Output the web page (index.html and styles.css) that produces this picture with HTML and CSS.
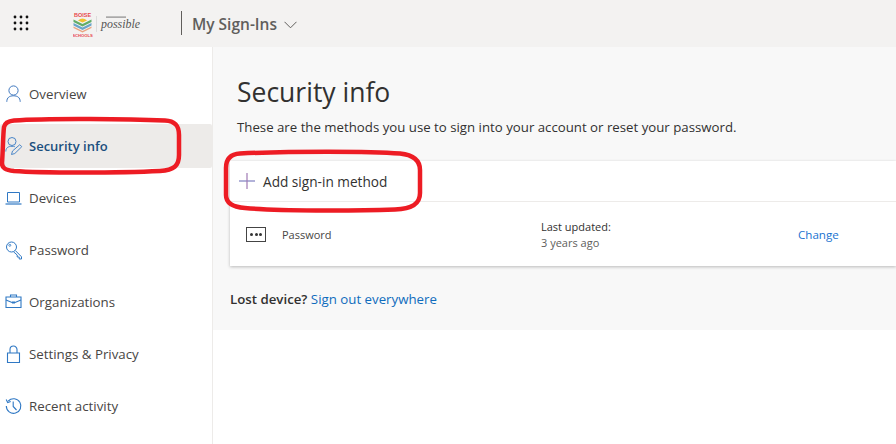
FILE: index.html
```html
<!DOCTYPE html>
<html lang="en">
<head>
<meta charset="utf-8">
<title>My Sign-Ins</title>
<link rel="stylesheet" href="styles.css">
</head>
<body>
<header class="topbar">
  <svg class="waffle" width="16" height="16" viewBox="0 0 16 16"><g fill="#111"><circle cx="2" cy="2" r="1.400"/><circle cx="8" cy="2" r="1.400"/><circle cx="14" cy="2" r="1.400"/><circle cx="2" cy="8" r="1.400"/><circle cx="8" cy="8" r="1.400"/><circle cx="14" cy="8" r="1.400"/><circle cx="2" cy="14" r="1.400"/><circle cx="8" cy="14" r="1.400"/><circle cx="14" cy="14" r="1.400"/></g></svg>
  <svg class="logo" width="70" height="26" viewBox="0 0 70 26">
    <text class="logo-boise" x="9.500" y="5.500" text-anchor="middle">BOISE</text>
    <path d="M5 9.500 Q9.500 5.500 14 9.500 L9.500 11.500Z" fill="#f2c230"/>
    <path d="M0.500 8.500 L9.500 13 L18.500 8.500 V11 L9.500 15.500 L0.500 11Z" fill="#62ad68"/>
    <path d="M0.500 12 L9.500 16.500 L18.500 12 V14.500 L9.500 19 L0.500 14.500Z" fill="#6aa5c9"/>
    <path d="M0.500 15.500 L9.500 20 L18.500 15.500 V17 L9.500 21.500 L0.500 17Z" fill="#e9a37f"/>
    <text class="logo-schools" x="9.500" y="25.500" text-anchor="middle">SCHOOLS</text>
    <rect x="23" y="5" width="1" height="16" fill="#dcdcdc"/>
    <rect x="33" y="5.500" width="20" height="1.200" fill="#8a8a8a"/>
    <text class="logo-script" x="28" y="17" textLength="39" lengthAdjust="spacingAndGlyphs">possible</text>
  </svg>
  <span class="divider"></span>
  <span class="app-title">My Sign-Ins</span>
  <svg class="chevron" width="13" height="8" viewBox="0 0 13 8"><path d="M.5.800 6.500 6.800 12.500.800" fill="none" stroke="#605e5c" stroke-width="1"/></svg>
</header>

<div class="layout">
  <nav class="sidebar">
    <a class="nav-item">
      <svg class="nav-icon" width="18" height="20" viewBox="0 0 18 20"><circle cx="8.500" cy="6.500" r="4.600" fill="none" stroke="#3f78bf" stroke-width="1"/><path d="M1.800 17.800C1.800 13.500 4.500 11.800 8.500 11.800s6.700 1.700 6.700 6" fill="none" stroke="#3f78bf" stroke-width="1"/></svg>
      <span>Overview</span>
    </a>
    <a class="nav-item active">
      <svg class="nav-icon" width="18" height="20" viewBox="0 0 18 20"><circle cx="7" cy="5.500" r="4" fill="none" stroke="#4a86c8" stroke-width="1"/><path d="M.8 15.500C.8 12 3 10.300 7 10.300c1 0 2 .1 2.800.4" fill="none" stroke="#4a86c8" stroke-width="1"/><path d="M6.500 18.500 7.500 15 14.800 8.700 16.800 10.700 9.800 17.500Z" fill="none" stroke="#4a86c8" stroke-width="1"/></svg>
      <span>Security info</span>
    </a>
    <a class="nav-item">
      <svg class="nav-icon" width="18" height="20" viewBox="0 0 18 20"><path d="M2.500 4.500h12v9.500h-12z" fill="none" stroke="#2f78c4" stroke-width="1"/><path d="M.5 16h16" fill="none" stroke="#2f78c4" stroke-width="1.200"/></svg>
      <span>Devices</span>
    </a>
    <a class="nav-item">
      <svg class="nav-icon" width="18" height="20" viewBox="0 0 18 20"><circle cx="6.500" cy="7" r="5" fill="none" stroke="#2f78c4" stroke-width="1"/><circle cx="4.800" cy="5.300" r="1" fill="none" stroke="#2f78c4" stroke-width=".8"/><path d="M10.300 10.500 16.500 16.800V19H14.200V17H12.200V15L8.500 11.800" fill="none" stroke="#2f78c4" stroke-width="1"/></svg>
      <span>Password</span>
    </a>
    <a class="nav-item">
      <svg class="nav-icon" width="18" height="20" viewBox="0 0 18 20"><path d="M1 5h15v10.500H1z" fill="none" stroke="#2f78c4" stroke-width="1.100"/><path d="M5.500 5V3h6v2" fill="none" stroke="#2f78c4" stroke-width="1.100"/><path d="M1 8l6 2.500h3L16 8" fill="none" stroke="#2f78c4" stroke-width="1.100"/><rect x="7" y="9.500" width="3" height="2" fill="#2f78c4"/></svg>
      <span>Organizations</span>
    </a>
    <a class="nav-item">
      <svg class="nav-icon" width="18" height="20" viewBox="0 0 18 20"><path d="M2.500 9h12v9.500h-12z" fill="none" stroke="#2f78c4" stroke-width="1.100"/><path d="M5 9V5.500a3.500 3.500 0 0 1 7 0V9" fill="none" stroke="#2f78c4" stroke-width="1.100"/></svg>
      <span>Settings &amp; Privacy</span>
    </a>
    <a class="nav-item">
      <svg class="nav-icon" width="18" height="20" viewBox="0 0 18 20"><path d="M3.300 5A7.300 7.300 0 1 1 1.300 10" fill="none" stroke="#2f78c4" stroke-width="1.100"/><path d="M1.200 3.500 2.700 6.500 5.700 5.500" fill="none" stroke="#2f78c4" stroke-width="1.100"/><path d="M8.200 5.500V10.500L11.500 14" fill="none" stroke="#2f78c4" stroke-width="1.100"/></svg>
      <span>Recent activity</span>
    </a>
  </nav>

  <main class="main">
    <section class="panel">
      <h1>Security info</h1>
      <p class="intro">These are the methods you use to sign into your account or reset your password.</p>
      <div class="card">
        <div class="add-row">
          <svg width="16" height="16" viewBox="0 0 16 16"><path d="M0 8h16" stroke="#7f7fc0" stroke-width="1.200"/><path d="M8 0v16" stroke="#a07ab4" stroke-width="1.200"/></svg>
          <span>Add sign-in method</span>
        </div>
        <div class="method-row">
          <span class="method-icon"><i></i><i></i><i></i></span>
          <span class="method-name">Password</span>
          <span class="method-date">Last updated:<br><span class="ago">3 years ago</span></span>
          <a class="change">Change</a>
        </div>
      </div>
      <p class="lost"><b>Lost device?</b> <a>Sign out everywhere</a></p>
    </section>
  </main>
</div>

<svg class="marks" width="896" height="444" viewBox="0 0 896 444">
  <path d="M14 120.500C50 118 130 119 165 120.500C176 121 179 127 179 135V155C179 166 174 170 160 171C120 173 40 173 14 171C5 170 2 168 2 163C3 150 3 135 4 127C5 122 9 121 14 120.500Z" fill="none" stroke="#ed1c24" stroke-width="4.500"/>
  <path d="M240 153.500C290 151 370 151 400 153.500C414 155 420 161 420 170V193C420 204 412 209 395 209.500C350 211 280 211 245 208C232 207 226 202 226 195V168C226 159 231 154 240 153.500Z" fill="none" stroke="#ed1c24" stroke-width="4.500"/>
</svg>
</body>
</html>
```

FILE: styles.css
```css
* { box-sizing: border-box; }
html, body { margin: 0; height: 100%; }
body {
  width: 896px;
  height: 444px;
  overflow: hidden;
  position: relative;
  background: #fff;
  font-family: "Open Sans", "Noto Sans", "Liberation Sans", sans-serif;
  color: #323130;
}
.topbar {
  height: 47px;
  background: #f3f2f1;
  display: flex;
  align-items: center;
  padding-left: 13px;
}
.waffle { flex: none; margin-top: -1px; }
.logo { flex: none; margin-left: 44px; margin-top: 1px; }
.logo-boise { font: 700 5.500px "Liberation Sans", sans-serif; fill: #e8474c; }
.logo-schools { font: 700 4.200px "Liberation Sans", sans-serif; fill: #e8474c; }
.logo-script { font: italic 13px "Liberation Serif", serif; fill: #555; }
.divider {
  width: 1px;
  height: 24px;
  background: #605e5c;
  margin-left: 38px;
  margin-top: -1px;
}
.app-title {
  margin-left: 10px;
  font-size: 15.500px;
  font-weight: 600;
  color: #605e5c;
}
.chevron { margin-left: 7px; margin-top: 2px; }
.layout { display: flex; height: 397px; }
.sidebar {
  width: 213px;
  flex: none;
  border-right: 1px solid #edebe9;
  padding-top: 25px;
  display: flex;
  flex-direction: column;
  gap: 8px;
}
.nav-item {
  height: 44px;
  display: flex;
  align-items: center;
  gap: 6px;
  padding-left: 4px;
  font-size: 13.300px;
  color: #484644;
  border-radius: 2px;
}
.nav-icon { flex: none; margin-left: 1px; }
.nav-item.active {
  background: #edebe9;
  color: #1b4f7e;
  font-size: 13px;
  font-weight: 600;
}
.main { flex: 1; min-width: 0; }
.panel {
  background: #f8f8f8;
  height: 283px;
  padding: 27px 0 0 17px;
}
h1 {
  margin: 0 0 0 7px;
  font-size: 26.500px;
  line-height: 36px;
  font-weight: 400;
  color: #323130;
}
.intro {
  margin: 8px 0 0 7px;
  font-size: 13.240px;
  line-height: 18px;
  color: #323130;
}
.card {
  margin-top: 25px;
  height: 105px;
  background: #fff;
  box-shadow: 0 1px 3px rgba(0, 0, 0, .25);
}
.add-row {
  height: 41px;
  display: flex;
  align-items: center;
  gap: 8px;
  padding-left: 9px;
  border-bottom: 1px solid #edebe9;
  font-size: 13.650px;
  color: #323130;
}
.method-row {
  height: 64px;
  display: flex;
  align-items: center;
  font-size: 11px;
  color: #484644;
}
.method-icon {
  width: 20px;
  height: 15px;
  border: 1.500px solid #444;
  margin-left: 16px;
  display: flex;
  align-items: center;
  justify-content: center;
  gap: 1.500px;
}
.method-icon i {
  width: 3px;
  height: 3px;
  border-radius: 50%;
  background: #333;
}
.method-name { margin-left: 16px; width: 259px; }
.method-date { width: 257px; margin-top: 2px; line-height: 16px; color: #323130; }
.ago { color: #605e5c; }
.change { color: #1a73d0; font-size: 11.600px; }
.lost {
  margin: 24px 0 0;
  font-size: 13.270px;
  line-height: 18px;
  color: #0f6cbd;
}
.lost b { color: #323130; font-weight: 600; }
.marks { position: absolute; left: 0; top: 0; pointer-events: none; }
```
